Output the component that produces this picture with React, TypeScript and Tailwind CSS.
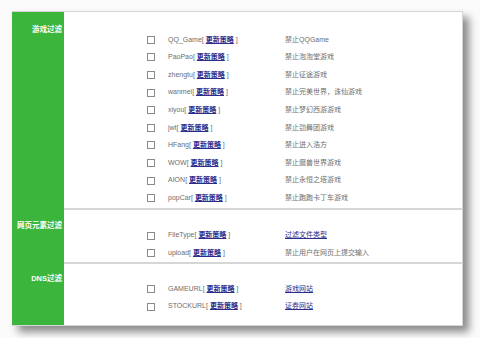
const font = { fontFamily: '"Liberation Sans", "Noto Sans CJK SC", sans-serif' }

type Rule = { name: string; desc: string; link?: boolean }

const sections: { label: string; labelPad: string; bodyPad: string; rows: Rule[] }[] = [
  {
    label: "游戏过滤",
    labelPad: "pt-[13px]",
    bodyPad: "pt-[19px] pb-[1px]",
    rows: [
      { name: "QQ_Game", desc: "禁止QQGame" },
      { name: "PaoPao", desc: "禁止泡泡堂游戏" },
      { name: "zhengtu", desc: "禁止征途游戏" },
      { name: "wanmei", desc: "禁止完美世界，诛仙游戏" },
      { name: "xiyou", desc: "禁止梦幻西游游戏" },
      { name: "jwt", desc: "禁止劲舞团游戏" },
      { name: "HFang", desc: "禁止进入浩方" },
      { name: "WOW", desc: "禁止魔兽世界游戏" },
      { name: "AION", desc: "禁止永恒之塔游戏" },
      { name: "popCar", desc: "禁止跑跑卡丁车游戏" },
    ],
  },
  {
    label: "网页元素过滤",
    labelPad: "pt-[11px]",
    bodyPad: "pt-[17px]",
    rows: [
      { name: "FileType", desc: "过滤文件类型", link: true },
      { name: "upload", desc: "禁止用户在网页上提交输入" },
    ],
  },
  {
    label: "DNS过滤",
    labelPad: "pt-[10px]",
    bodyPad: "pt-[16px] pb-[10px]",
    rows: [
      { name: "GAMEURL", desc: "游戏网站", link: true },
      { name: "STOCKURL", desc: "证券网站", link: true },
    ],
  },
]

function RuleRow({ rule }: { rule: Rule }) {
  return (
    <div className="flex h-[17.6px] items-center text-[7px] text-[#6e6e6e]">
      <span className="ml-[83px] h-[8px] w-[8px] border border-[#8a8a8a] bg-white" />
      <span className="ml-[13px] w-[117px]">
        {rule.name}[{" "}
        <a className="font-bold text-[#2b2b8a] underline">更新策略</a> ]
      </span>
      {rule.link ? (
        <a className="text-[#2b2b8a] underline">{rule.desc}</a>
      ) : (
        <span>{rule.desc}</span>
      )}
    </div>
  )
}

export default function App() {
  return (
    <div className="h-[338px] w-[480px] bg-[#fbfbfb] pl-[12px] pt-[11px]" style={font}>
      <div className="w-[451px] border-t border-r border-b border-[#d6d6d6] bg-white shadow-[6px_6px_8px_rgba(0,0,0,0.45)]">
        {sections.map((section, i) => (
          <div key={section.label} className="flex">
            <div
              className={`w-[52px] flex-none bg-[#3bb53b] pr-[2px] text-right text-[7.5px] font-bold leading-[10px] text-white ${section.labelPad}`}
            >
              {section.label}
            </div>
            <div
              className={`flex-1 ${i < sections.length - 1 ? "border-b-2 border-[#d6d6d6]" : ""} ${section.bodyPad}`}
            >
              {section.rows.map((rule) => (
                <RuleRow key={rule.name} rule={rule} />
              ))}
            </div>
          </div>
        ))}
      </div>
    </div>
  )
}
